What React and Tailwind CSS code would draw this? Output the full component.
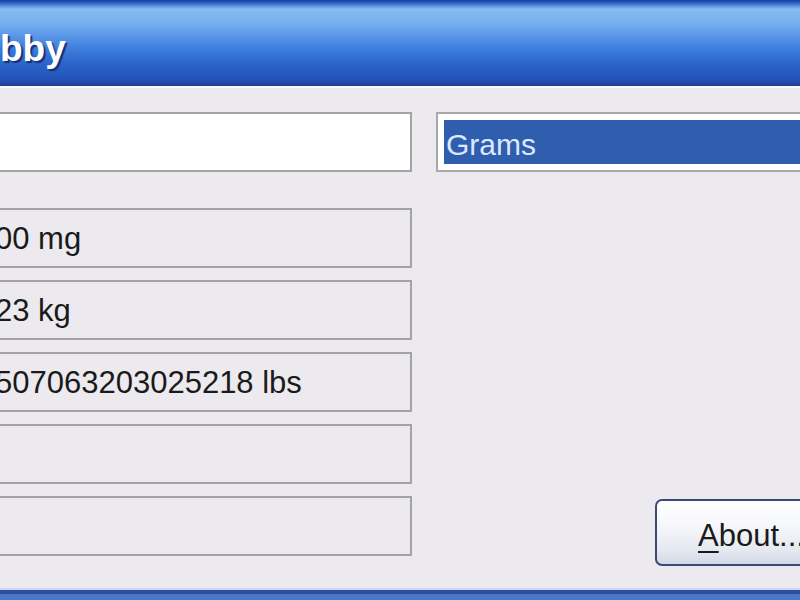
import React from "react";

const font = { fontFamily: '"Liberation Sans", Arial, sans-serif' };

const ReadOnlyBox = ({ text }) => {
    return (
        <div className="h-[60px] border-2 border-[#a3a3a6] bg-[#eceaee] flex items-center pl-[23px] overflow-hidden">
            <span className="text-[31px] text-[#1a1a1a] whitespace-nowrap leading-none">{text}</span>
        </div>
    );
};

const App = () => {
    return (
        <div className="w-[800px] h-[600px] overflow-hidden flex flex-col bg-[#eceaee]" style={font}>
            {/* title bar */}
            <div className="h-[86px] shrink-0 bg-[linear-gradient(to_bottom,#0f3c9e_0px,#2f63c4_3px,#84bdf0_9px,#79b2ee_22px,#5e9ae8_34px,#3b7bdc_50px,#2a62c8_66px,#2452b8_80px,#1d3f94_86px)] flex items-center">
                <span className="text-white font-bold text-[37px] leading-none mt-[10px] [text-shadow:2px_2px_1px_#16307a]">bby</span>
            </div>
            <div className="h-[2px] shrink-0 bg-[#f7f7fc]"></div>

            {/* body */}
            <div className="flex-1 flex gap-6 pt-6 pb-[22px]">
                {/* left column */}
                <div className="w-[442px] shrink-0 ml-[-30px] flex flex-col pb-[10px]">
                    <div className="h-[60px] border-2 border-[#a3a3a6] bg-white"></div>
                    <div className="flex flex-col gap-3 mt-9">
                        <ReadOnlyBox text="00 mg" />
                        <ReadOnlyBox text="23 kg" />
                        <ReadOnlyBox text="507063203025218 lbs" />
                        <ReadOnlyBox text="" />
                        <ReadOnlyBox text="" />
                    </div>
                </div>

                {/* right column */}
                <div className="flex-1 mr-[-60px] flex flex-col">
                    <div className="h-[60px] border-2 border-[#a8a8ab] bg-white p-[6px]">
                        <div className="h-full bg-[#2f5eae] flex items-center pl-[2px] pt-[6px]">
                            <span className="text-[30px] text-[#dbe8ff] leading-none">Grams</span>
                        </div>
                    </div>
                    <div className="mt-auto ml-[219px]">
                        <button className="w-[200px] h-[67px] rounded-[7px] border-2 border-[#3a4a74] bg-[linear-gradient(to_bottom,#ffffff_0%,#f6f7fa_40%,#e3e7f0_80%,#d2d8e6_100%)] flex items-center pl-[41px] pt-[5px] text-[31px] text-[#1a1a1a] leading-none">
                            <span className="underline underline-offset-[5px] decoration-2">A</span>bout...
                        </button>
                    </div>
                </div>
            </div>

            {/* bottom border */}
            <div className="h-[2px] shrink-0 bg-[#c9d6f5]"></div>
            <div className="h-[4px] shrink-0 bg-[#2f4f9e]"></div>
            <div className="h-[6px] shrink-0 bg-[#4a78c8]"></div>
        </div>
    );
};

export default App;
